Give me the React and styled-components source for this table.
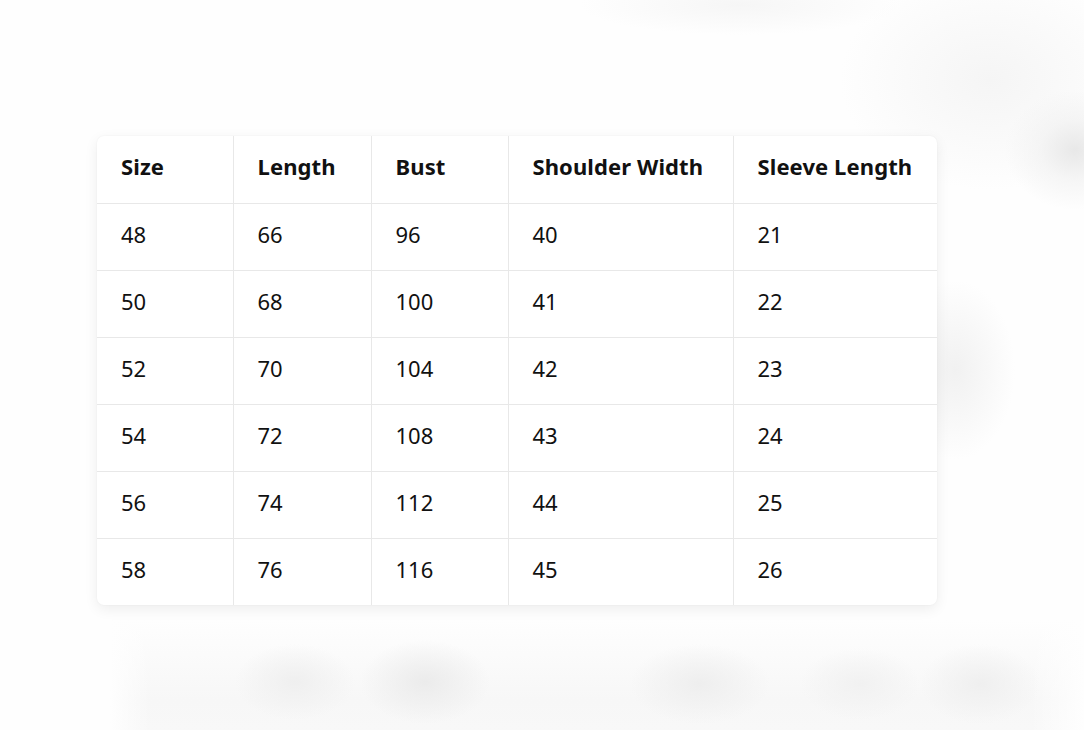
import React from "react";
import styled, { createGlobalStyle } from "styled-components";

const Global = createGlobalStyle`
  html, body { margin: 0; padding: 0; background: #ffffff; }
  body { font-family: "Noto Sans", "Open Sans", "DejaVu Sans", sans-serif; color: #111; }
`;

const Page = styled.div`
  width: 1084px;
  height: 730px;
  overflow: hidden;
  box-sizing: border-box;
  display: flex;
  align-items: flex-start;
  padding: 136px 0 0 97px;
  background:
    radial-gradient(ellipse 70px 60px at 1075px 150px, #e8e8e8 0%, rgba(240,240,240,0.6) 50%, rgba(255,255,255,0) 100%),
    radial-gradient(ellipse 150px 110px at 990px 80px, #f5f5f5 0%, rgba(255,255,255,0) 100%),
    radial-gradient(ellipse 60px 90px at 955px 370px, #f1f1f1 0%, rgba(255,255,255,0) 100%),
    radial-gradient(ellipse 160px 30px at 740px 5px, #f6f6f6 0%, rgba(255,255,255,0) 100%),
    radial-gradient(ellipse 60px 38px at 295px 682px, #efefef 0%, rgba(255,255,255,0) 100%),
    radial-gradient(ellipse 65px 42px at 425px 682px, #ebebeb 0%, rgba(255,255,255,0) 100%),
    radial-gradient(ellipse 70px 40px at 700px 684px, #eeeeee 0%, rgba(255,255,255,0) 100%),
    radial-gradient(ellipse 60px 36px at 860px 684px, #f1f1f1 0%, rgba(255,255,255,0) 100%),
    radial-gradient(ellipse 60px 40px at 980px 684px, #efefef 0%, rgba(255,255,255,0) 100%),
    linear-gradient(to right, #fefefe 110px, rgba(254,254,254,0) 150px, rgba(254,254,254,0) 1030px, #fefefe 1084px),
    linear-gradient(to bottom, rgba(255,255,255,0) 620px, #f7f7f7 700px, #f8f8f8 730px),
    #fefefe;
`;

const Card = styled.div`
  width: 840px;
  background: #fff;
  border-radius: 7px;
  box-shadow: 0 4px 14px rgba(0, 0, 0, 0.07), 0 0 2px rgba(0, 0, 0, 0.05);
  overflow: hidden;
`;

const Table = styled.table`
  width: 100%;
  border-collapse: collapse;
  table-layout: fixed;
`;

const Col = styled.col`
  width: ${(p) => p.$w}px;
`;

const Cell = styled.td`
  text-align: left;
  font-size: 22px;
  font-weight: ${(p) => (p.$head ? 700 : 400)};
  letter-spacing: ${(p) => (p.$head ? "0.1px" : "0")};
  height: 67px;
  padding: 0 0 ${(p) => (p.$head ? 7 : 6)}px 24px;
  box-sizing: border-box;
  border-right: 1px solid #e8e8e8;
  border-bottom: 1px solid #e8e8e8;
  white-space: nowrap;
  &:last-child { border-right: none; }
`;

const Row = styled.tr`
  &:last-child td { border-bottom: none; }
`;

const cols = [136, 138, 137, 225, 204];
const headers = ["Size", "Length", "Bust", "Shoulder Width", "Sleeve Length"];
const data = [
  [48, 66, 96, 40, 21],
  [50, 68, 100, 41, 22],
  [52, 70, 104, 42, 23],
  [54, 72, 108, 43, 24],
  [56, 74, 112, 44, 25],
  [58, 76, 116, 45, 26],
];

export default function App() {
  return (
    <>
      <Global />
      <Page>
        <Card>
          <Table>
            <colgroup>
              {cols.map((w, i) => (
                <Col key={i} $w={w} />
              ))}
            </colgroup>
            <thead>
              <Row>
                {headers.map((h) => (
                  <Cell as="th" $head key={h}>
                    {h}
                  </Cell>
                ))}
              </Row>
            </thead>
            <tbody>
              {data.map((r, i) => (
                <Row key={i}>
                  {r.map((v, j) => (
                    <Cell key={j}>{v}</Cell>
                  ))}
                </Row>
              ))}
            </tbody>
          </Table>
        </Card>
      </Page>
    </>
  );
}
